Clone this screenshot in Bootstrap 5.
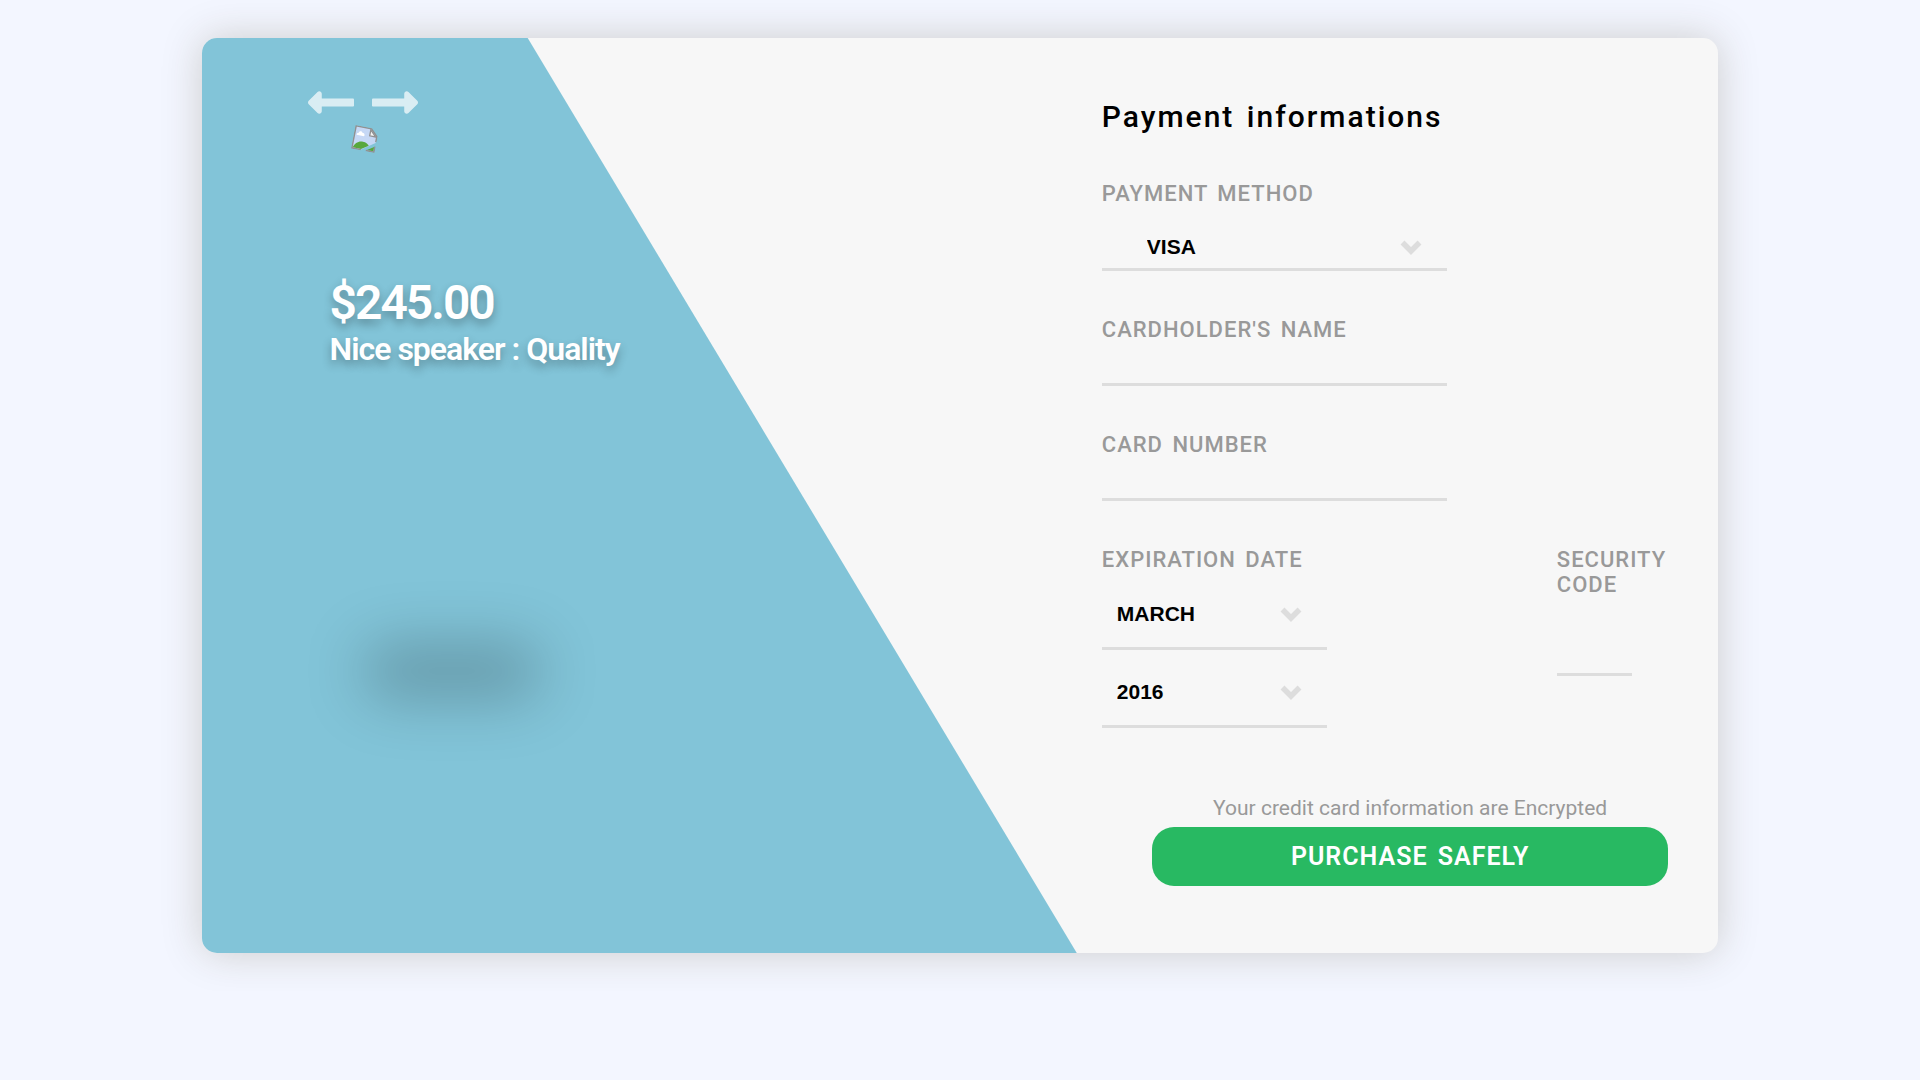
<!DOCTYPE html>
<html lang="en">
<head>
<meta charset="utf-8">
<meta name="viewport" content="width=device-width, initial-scale=1">
<title>Payment informations</title>
<link href="https://cdn.jsdelivr.net/npm/bootstrap@5.3.0/dist/css/bootstrap.min.css" rel="stylesheet">
<style>
  body { background: #f3f6ff; font-family: Roboto, "Liberation Sans", sans-serif; color: #000; }
  .checkout { width: 79%; margin: 38px auto; background: #f7f7f7; border-radius: 15px; box-shadow: 0 0 40px #ccc; }
  .checkout-backdrop { background: #82c4d8; clip-path: polygon(0 0, 21.5% 0, 57.7% 100%, 0 100%); border-radius: 15px; }
  .product { flex: 0 0 59.35%; padding: 53px 0 0 106px; color: #fff; }
  .arrows { gap: 18px; }
  .arrow-link { color: #fff; opacity: .7; line-height: 0; }
  .photo { margin: 13px 0 0 45px; transform: rotate(11deg); }
  .offer { margin: 124px 0 0 22px; text-shadow: 0 5px 10px rgba(0, 0, 0, .3); letter-spacing: -1px; }
  .price { font-size: 48px; line-height: 56px; font-weight: 600; letter-spacing: -2px; }
  .product-name { font-size: 32px; line-height: 36px; font-weight: 600; }
  .floor-shadow { width: 180px; height: 56px; margin: 276px 0 0 54px; border-radius: 28px; background: rgba(0, 0, 0, .22); filter: blur(29px); }
  .pay-form { padding: 61px 0 67px; }
  .form-title { font-size: 30px; line-height: 35px; font-weight: 500; letter-spacing: 2px; word-spacing: 3px; margin-bottom: 47px; }
  .field { margin-bottom: 46px; }
  .field-label { display: block; font-size: 22px; line-height: 25px; font-weight: 500; letter-spacing: 1px; word-spacing: 3px; text-transform: uppercase; color: #999; }
  .line-input, .line-select.form-select { border: 0; border-bottom: 3px solid #ddd; border-radius: 0; background-color: transparent; font: bold 21px "Liberation Sans", Arial, sans-serif; color: #000; }
  .line-input { display: block; width: 345px; max-width: 100%; height: 44px; padding: 0 15px; }
  .line-select.form-select { width: 345px; height: 47px; margin-top: 18px; padding: 0 60px 0 45px; background-position: right 25px center; background-size: 22px 24px;
    --bs-form-select-bg-img: url("data:image/svg+xml,%3csvg xmlns='http://www.w3.org/2000/svg' viewBox='0 0 22 24'%3e%3cpath d='M2.500 8.500 11 17l8.500-8.500' fill='none' stroke='%23ddd' stroke-width='5.500'/%3e%3c/svg%3e"); }
  .line-select.date-select { width: 225px; height: 71px; margin-top: 7px; padding-left: 15px; }
  .expiry { flex: 0 0 73.8%; }
  .line-input.code-input { width: 75px; margin-top: 35px; }
  .pay-footer { margin-top: 68px; padding: 0 50px; }
  .note { font-size: 21px; line-height: 25px; color: #999; margin-bottom: 6px; }
  .buy-button { height: 59px; border: 0; border-radius: 22px; background: #28b962; color: #fff; font-size: 25px; font-weight: 600; letter-spacing: 1px; word-spacing: 3px; text-transform: uppercase; }
  .buy-button:hover { background: #229f54; color: #fff; }
</style>
</head>
<body>
<main class="checkout position-relative d-flex">
  <div class="checkout-backdrop position-absolute top-0 start-0 w-100 h-100"></div>
  <section class="product position-relative">
    <nav class="arrows d-flex" aria-label="Products">
      <a class="arrow-link" href="#" aria-label="Previous"><svg width="46" height="23" viewBox="0 144 448 224" fill="currentColor"><path d="M134.059 296H436c6.627 0 12-5.373 12-12v-56c0-6.627-5.373-12-12-12H134.059v-46.059c0-21.382-25.851-32.09-40.971-16.971L7.029 239.029c-9.373 9.373-9.373 24.569 0 33.941l86.059 86.059c15.119 15.119 40.971 4.411 40.971-16.971V296z"/></svg></a>
      <a class="arrow-link" href="#" aria-label="Next"><svg width="46" height="23" viewBox="0 144 448 224" fill="currentColor"><path d="M313.941 216H12c-6.627 0-12 5.373-12 12v56c0 6.627 5.373 12 12 12h301.941v46.059c0 21.382 25.851 32.09 40.971 16.971l86.059-86.059c9.373-9.373 9.373-24.569 0-33.941l-86.059-86.059c-15.119-15.119-40.971-4.411-40.971 16.971V216z"/></svg></a>
    </nav>
    <svg class="photo d-block" width="24" height="24" viewBox="0 0 24 24">
      <path d="M.8.800H16.500L23.200 7.500V14L10 23.200H.8z" fill="#c6d8f5"/>
      <path d="M3 9.500h7.500c1-2-.8-3.500-2-3-.8-2-3.500-1.800-3.800.5C3.200 7 2.500 8.500 3 9.500z" fill="#fff"/>
      <path d="M1.500 22.500c1-4.500 4.500-7.500 9-7.500 3 0 5 1 6.500 3L10 22.500z" fill="#58a83c"/>
      <path d="M10 23.200H.8V.8H16.500L23.200 7.500V13" fill="none" stroke="#919191" stroke-width="1.500"/>
      <path d="M16 2v6h6z" fill="#f4f4f4" stroke="#919191" stroke-width="1.300"/>
      <path d="M16 22.500 22.500 18v4.500z" fill="#58a83c"/>
      <path d="M15 23.200h8.200V17.500" fill="none" stroke="#919191" stroke-width="1.500"/>
    </svg>
    <div class="offer">
      <div class="price">$245.00</div>
      <div class="product-name">Nice speaker : Quality</div>
    </div>
    <div class="floor-shadow"></div>
  </section>
  <form class="pay-form position-relative flex-grow-1">
    <h1 class="form-title">Payment informations</h1>
    <div class="field">
      <label class="field-label" for="method">Payment method</label>
      <select class="form-select line-select" id="method"><option>VISA</option><option>MASTERCARD</option></select>
    </div>
    <div class="field">
      <label class="field-label" for="holder">Cardholder's name</label>
      <input class="line-input" id="holder" type="text">
    </div>
    <div class="field">
      <label class="field-label" for="number">Card number</label>
      <input class="line-input" id="number" type="text">
    </div>
    <div class="d-flex">
      <div class="expiry">
        <label class="field-label" for="month">Expiration date</label>
        <select class="form-select line-select date-select" id="month"><option>MARCH</option><option>APRIL</option></select>
        <select class="form-select line-select date-select" id="year" aria-label="Expiration year"><option>2016</option><option>2017</option></select>
      </div>
      <div>
        <label class="field-label" for="code">Security code</label>
        <input class="line-input code-input" id="code" type="text">
      </div>
    </div>
    <div class="pay-footer text-center">
      <p class="note">Your credit card information are Encrypted</p>
      <button class="buy-button btn w-100" type="submit">Purchase safely</button>
    </div>
  </form>
</main>
<script src="https://cdn.jsdelivr.net/npm/bootstrap@5.3.0/dist/js/bootstrap.bundle.min.js"></script>
</body>
</html>
